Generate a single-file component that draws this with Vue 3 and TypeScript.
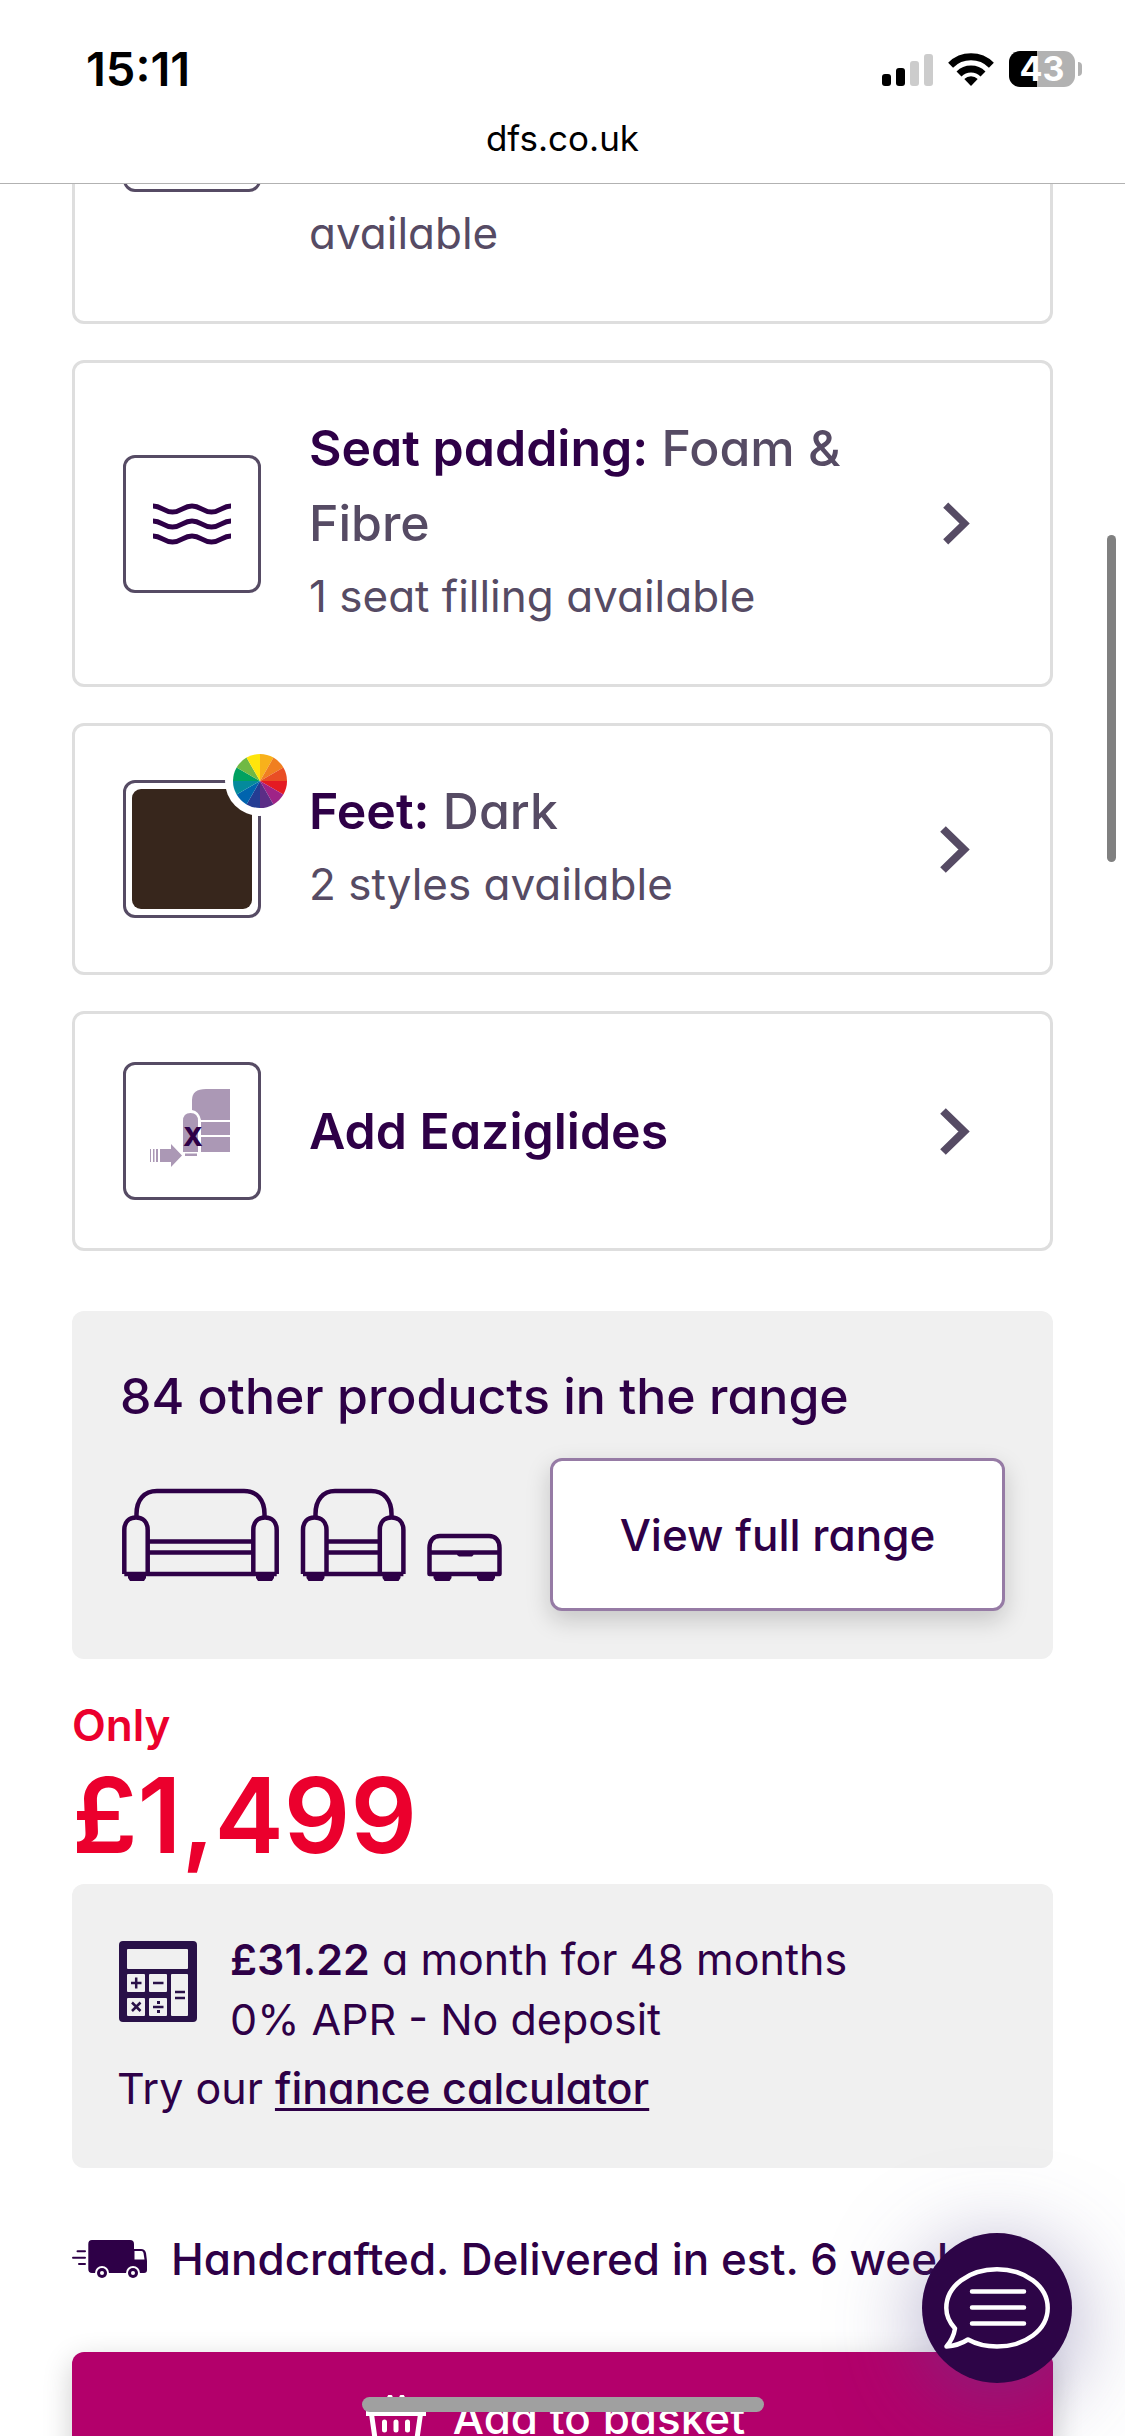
<script setup lang="ts">
interface Slice {
  color: string
  path: string
}

const wheelColors: string[] = [
  '#f8b11b', '#f07f21', '#e94e24', '#e41b23', '#9f2387', '#5b2d86',
  '#243c93', '#0064ae', '#048a9c', '#00a160', '#70b944', '#fee50b',
]

const slices: Slice[] = wheelColors.map((color, i) => {
  const point = (step: number): string => {
    const angle = (step * Math.PI) / 6 - Math.PI / 2
    return `${(36 + 27 * Math.cos(angle)).toFixed(2)} ${(36 + 27 * Math.sin(angle)).toFixed(2)}`
  }
  return { color, path: `M36 36L${point(i)}A27 27 0 0 1 ${point(i + 1)}Z` }
})
</script>

<template>
  <div class="page">
    <header class="browser">
      <div class="status">
        <span class="time">15:11</span>
        <div class="signals">
          <svg width="51" height="33" viewBox="0 0 51 33" aria-hidden="true">
            <rect x="0" y="21" width="9" height="12" rx="3" />
            <rect x="14" y="15" width="9" height="18" rx="3" />
            <rect x="28" y="8" width="9" height="25" rx="3" fill="#ccc" />
            <rect x="42" y="1" width="9" height="32" rx="3" fill="#ccc" />
          </svg>
          <svg width="46" height="33" viewBox="0 0 46 33" aria-hidden="true">
            <path d="M23 33L16.300 26.100A9.500 9.500 0 0 1 29.700 26.100Z" />
            <path d="M11 21A17 17 0 0 1 35 21" fill="none" stroke="#000" stroke-width="7" />
            <path d="M2.600 12.200A29 29 0 0 1 43.400 12.200" fill="none" stroke="#000" stroke-width="7" />
          </svg>
          <div class="battery">
            <span class="level">43</span>
            <span class="nub"></span>
          </div>
        </div>
      </div>
      <div class="address">dfs.co.uk</div>
    </header>

    <main class="content">
      <div class="clip">
        <button type="button" class="card card-tall">
          <span class="thumb"></span>
          <span class="copy"><span class="note">available</span></span>
        </button>
      </div>

      <button type="button" class="card">
        <span class="thumb">
          <svg width="78" height="42" viewBox="0 0 78 42" fill="none" stroke="#2e0047" stroke-width="5" aria-hidden="true">
            <path v-for="y in [3, 18, 33]" :key="y" :d="`M0 ${y}C9 ${y} 10 ${y + 6} 19.500 ${y + 6}S30 ${y} 39 ${y}S49 ${y + 6} 58.500 ${y + 6}S69 ${y} 78 ${y}`" />
          </svg>
        </span>
        <span class="copy">
          <span class="title"><b>Seat padding:</b> Foam &amp; Fibre</span>
          <span class="note">1 seat filling available</span>
        </span>
        <svg class="chevron chevron-small" viewBox="0 0 30 47" aria-hidden="true">
          <path d="M3 3L24 23.500L3 44" />
        </svg>
      </button>

      <button type="button" class="card">
        <span class="thumb">
          <span class="swatch"></span>
          <svg class="wheel" width="72" height="72" viewBox="0 0 72 72" aria-hidden="true">
            <circle cx="36" cy="36" r="35" fill="#fff" />
            <path v-for="s in slices" :key="s.color" :d="s.path" :fill="s.color" />
          </svg>
        </span>
        <span class="copy">
          <span class="title"><b>Feet:</b> Dark</span>
          <span class="note">2 styles available</span>
        </span>
        <svg class="chevron" viewBox="0 0 30 47" aria-hidden="true">
          <path d="M3 3L24 23.500L3 44" />
        </svg>
      </button>

      <button type="button" class="card">
        <span class="thumb">
          <svg width="132" height="132" viewBox="126 1065 132 132" fill="#ab98b5" aria-hidden="true">
            <path d="M192 1120V1100Q192 1089 206 1089H230V1120H201Q199 1111 192 1110Z" />
            <path d="M201 1122H230V1135H201ZM201 1137H230V1152H201Z" />
            <path d="M183 1152V1121Q183 1113 190.500 1113T198 1121V1152Z" />
            <path d="M185 1153.500H197V1156H185Z" />
            <path d="M150 1149h1v13h-1zM153 1149h1.500v13h-1.500zM156 1149h2v13h-2zM160 1149H171V1144L182 1155.500L171 1167V1162H160Z" />
            <text x="193" y="1146" class="mark">X</text>
          </svg>
        </span>
        <span class="copy">
          <span class="title"><b>Add Eaziglides</b></span>
        </span>
        <svg class="chevron" viewBox="0 0 30 47" aria-hidden="true">
          <path d="M3 3L24 23.500L3 44" />
        </svg>
      </button>

      <section class="range">
        <h2>84 other products in the range</h2>
        <div class="range-row">
          <svg class="sofas" width="380" height="93" viewBox="0 0 380 93" fill="none" stroke="#2e0047" stroke-width="4.500" stroke-linejoin="round" aria-hidden="true">
            <path d="M2.300 86V42C2.300 34 7 29.500 14 29.500S25.700 34 25.700 42V86M131.300 86V42C131.300 34 136 29.500 143 29.500S154.700 34 154.700 42V86" />
            <path d="M14.500 30V26C14.500 12 22 3 35 3H122C135 3 142.500 12 142.500 26V30M26 53.500H131M26 64.500H131M2.300 86H154.700" />
            <path d="M181 86V42C181 34 185.500 29.500 192.500 29.500S204.500 34 204.500 42V86M257.800 86V42C257.800 34 262.500 29.500 269.500 29.500S281.400 34 281.400 42V86" />
            <path d="M193.500 30V26C193.500 12 201 3 213 3H249C262 3 269.500 12 269.500 26V30M204.500 53.500H258M204.500 64.500H258M181 86H281.400" />
            <path d="M307.500 86V60C307.500 52 312 48 318 48H367C373 48 377.500 52 377.500 60V86ZM307.500 64.500H377.500" />
            <path fill="#2e0047" stroke="none" d="M6 86H24V90L22 93H8L6 90ZM134 86H152V90L150 93H136L134 90ZM184.500 86H202.500V90L200.500 93H186.500L184.500 90ZM260.500 86H278.500V90L276.500 93H262.500L260.500 90ZM311.500 86H329.500V90L327.500 93H313.500L311.500 90ZM355 86H373V90L371 93H357L355 90ZM335 65H351.500V67L350 68.500H337L335 67Z" />
          </svg>
          <button type="button" class="view">View full range</button>
        </div>
      </section>

      <div class="only">Only</div>
      <div class="price">£1,499</div>

      <section class="finance">
        <div class="finance-row">
          <svg width="78" height="81" viewBox="0 0 78 81" aria-hidden="true">
            <rect width="78" height="81" rx="4" fill="#291148" />
            <g fill="#f0f0f0">
              <rect x="8" y="8" width="61" height="20" rx="1" />
              <rect x="8" y="33" width="18" height="18" rx="1" />
              <rect x="30" y="33" width="18" height="18" rx="1" />
              <rect x="8" y="57" width="18" height="18" rx="1" />
              <rect x="30" y="57" width="18" height="18" rx="1" />
              <rect x="52" y="33" width="17" height="42" rx="1" />
            </g>
            <path d="M12 42H22.500M17.200 36.500V47.500M34 42H44.500M56 51H66M56 57H66M13 61.500L21.500 70M21.500 61.500L13 70M34 66H44.500" stroke="#291148" stroke-width="2.500" />
            <path d="M38 60h3v3h-3zM38 69h3v3h-3z" fill="#291148" />
          </svg>
          <div>
            <div><b>£31.22</b> a month for 48 months</div>
            <div>0% APR - No deposit</div>
          </div>
        </div>
        <div class="try">Try our <a href="#finance">finance calculator</a></div>
      </section>

      <div class="delivery">
        <svg width="75" height="38" viewBox="0 0 75 38" fill="#2e0047" aria-hidden="true">
          <path d="M20 0H58Q62 0 62 4V9H69Q73 9 74 13L75 21V30Q75 33 72 33H20Q16.300 33 16.300 29V4Q16.300 0 20 0Z" />
          <path d="M62.500 11H69.500Q71 11 71.500 13L72.500 19.500H62.500Z" fill="#fff" />
          <path d="M5.500 11.300H13M1 17.700H13M7 24H13" stroke="#2e0047" stroke-width="2" stroke-linecap="round" />
          <g v-for="x in [30, 61]" :key="x">
            <circle :cx="x" cy="33" r="7" fill="#fff" />
            <circle :cx="x" cy="33" r="5" />
            <circle :cx="x" cy="33" r="2" fill="#fff" />
          </g>
        </svg>
        <span>Handcrafted. Delivered in est. 6 weeks</span>
      </div>

      <button type="button" class="basket">
        <svg width="60" height="46" viewBox="0 0 60 46" fill="none" stroke="#fff" stroke-width="5" aria-hidden="true">
          <path d="M24 2L15 18M36 2L45 18M18.500 27V35M30 27V35M41.500 27V35" stroke-linecap="round" />
          <path d="M0 18.500H60M5.500 19L9 43.500H51L54.500 19" />
        </svg>
        <span>Add to basket</span>
      </button>
    </main>

    <span class="scroll-thumb"></span>
    <span class="home-bar"></span>
    <button type="button" class="chat" aria-label="Chat with us">
      <svg width="106" height="82" viewBox="0 0 106 82" fill="none" stroke="#fff" stroke-width="4.500" stroke-linecap="round" stroke-linejoin="round" aria-hidden="true">
        <path d="M11 61.500C5 55 2.300 48 2.300 41C2.300 19 25 2.300 53 2.300S103.700 19 103.700 41S81 79.500 53 79.500C42 79.500 32 77 24 72.500C17 77 10 79 2.500 79.500C8 73 10 68 11 61.500Z" />
        <path d="M28 24.500H80M28 40.500H80M28 56.500H80" />
      </svg>
    </button>
  </div>
</template>

<style>
body {
  margin: 0;
}
</style>

<style scoped>
.page {
  height: 100vh;
  overflow: hidden;
  position: relative;
  background: #fff;
  color: #2e0047;
  font-family: Inter, "Liberation Sans", sans-serif;
  font-feature-settings: "cv11";
  font-size: 44px;
  line-height: 60px;
}

button {
  font: inherit;
  font-feature-settings: inherit;
  color: inherit;
  cursor: pointer;
}

svg {
  display: block;
  flex: none;
}

b {
  font-weight: 600;
}

.browser {
  border-bottom: 1px solid #b2b2b2;
  color: #000;
  font-feature-settings: normal;
}

.status {
  display: flex;
  justify-content: space-between;
  align-items: center;
  height: 98px;
  padding: 40px 43px 0 86px;
  box-sizing: border-box;
}

.time {
  font-size: 47px;
  font-weight: 600;
}

.signals {
  display: flex;
  align-items: center;
  gap: 15px;
}

.battery {
  display: flex;
  align-items: center;
  gap: 3px;
}

.level {
  width: 66px;
  border-radius: 11px;
  background: linear-gradient(90deg, #000 28px, #b2b2b2 28px);
  color: #fff;
  font-size: 34px;
  font-weight: 700;
  line-height: 36px;
  text-align: center;
}

.nub {
  width: 4px;
  height: 14px;
  border-radius: 0 4px 4px 0;
  background: #b2b2b2;
}

.address {
  padding: 10px 0 15px;
  font-size: 35px;
  text-align: center;
}

.content {
  display: flex;
  flex-direction: column;
  padding: 0 72px;
}

.clip {
  display: flex;
  align-items: flex-end;
  height: 140px;
  margin-bottom: 36px;
  overflow: hidden;
}

.card {
  display: flex;
  align-items: center;
  gap: 48px;
  width: 100%;
  box-sizing: border-box;
  margin: 0 0 36px;
  padding: 48px 80px 48px 48px;
  border: 3px solid #dedede;
  border-radius: 12px;
  background: #fff;
  text-align: left;
}

.card-tall {
  flex: none;
  height: 402px;
  margin: 0;
}

.card-tall .copy {
  align-self: flex-end;
}

.thumb {
  display: flex;
  align-items: center;
  justify-content: center;
  position: relative;
  flex: none;
  width: 138px;
  height: 138px;
  box-sizing: border-box;
  border: 3px solid #564b64;
  border-radius: 12px;
}

.swatch {
  width: 120px;
  height: 120px;
  border-radius: 9px;
  background: #37261c;
}

.wheel {
  position: absolute;
  top: -38px;
  right: -38px;
}

.mark {
  fill: #2e0047;
  font-size: 26px;
  font-weight: 800;
  text-anchor: middle;
}

.copy {
  display: flex;
  flex-direction: column;
  flex: 1;
  color: #564b64;
  line-height: 75px;
}

.title {
  font-size: 50px;
  font-weight: 500;
}

.title b {
  color: #2e0047;
}

.note {
  padding-bottom: 4px;
  line-height: 71px;
}

.chevron {
  width: 30px;
  height: 47px;
  fill: none;
  stroke: #564b64;
  stroke-width: 8px;
}

.chevron-small {
  width: 27px;
  height: 43px;
}

.range {
  margin-top: 24px;
  padding: 48px;
  border-radius: 12px;
  background: #f0f0f0;
}

h2 {
  margin: 0 0 24px;
  font-size: 50px;
  font-weight: 500;
  line-height: 75px;
}

.range-row {
  display: flex;
  align-items: center;
  gap: 48px;
}

.sofas {
  margin-left: 2px;
}

.view {
  flex: 1;
  height: 153px;
  padding: 0;
  border: 3px solid #967ba5;
  border-radius: 12px;
  background: #fff;
  box-shadow: 0 9px 24px rgba(0, 0, 0, 0.18);
  font-weight: 500;
}

.only {
  margin-top: 36px;
  color: #eb002d;
  font-weight: 600;
}

.price {
  margin-bottom: 9px;
  color: #eb002d;
  font-size: 104px;
  font-weight: 600;
  line-height: 120px;
}

.finance {
  padding: 45px 45px 50px;
  border-radius: 12px;
  background: #f0f0f0;
  font-size: 43px;
}

.finance-row {
  display: flex;
  gap: 33px;
  margin-bottom: 9px;
}

.finance-row svg {
  margin: 12px 0 0 2px;
}

.finance a {
  color: inherit;
  font-weight: 500;
  text-decoration-thickness: 3px;
  text-underline-offset: 4px;
  text-decoration-skip-ink: none;
}

.delivery {
  display: flex;
  align-items: center;
  gap: 24px;
  margin: 61px 0 63px;
  font-weight: 500;
  white-space: nowrap;
}

.basket {
  display: flex;
  align-items: center;
  justify-content: center;
  gap: 27px;
  height: 132px;
  padding: 0 14px 0 0;
  border: 0;
  border-radius: 12px;
  background: #b3006b;
  box-shadow: 0 9px 30px rgba(0, 0, 0, 0.2);
  color: #fff;
  font-weight: 500;
}

.scroll-thumb {
  position: fixed;
  top: 535px;
  right: 9px;
  width: 9px;
  height: 327px;
  border-radius: 5px;
  background: #808080;
}

.home-bar {
  position: fixed;
  bottom: 24px;
  left: 50%;
  width: 402px;
  height: 15px;
  margin-left: -201px;
  border-radius: 8px;
  background: #a0a0a0;
}

.chat {
  display: flex;
  align-items: center;
  justify-content: center;
  position: fixed;
  right: 53px;
  bottom: 53px;
  width: 150px;
  height: 150px;
  padding: 0;
  border: 0;
  border-radius: 50%;
  background: #2d0547;
  box-shadow: 0 15px 90px rgba(84, 74, 140, 0.5);
}
</style>
